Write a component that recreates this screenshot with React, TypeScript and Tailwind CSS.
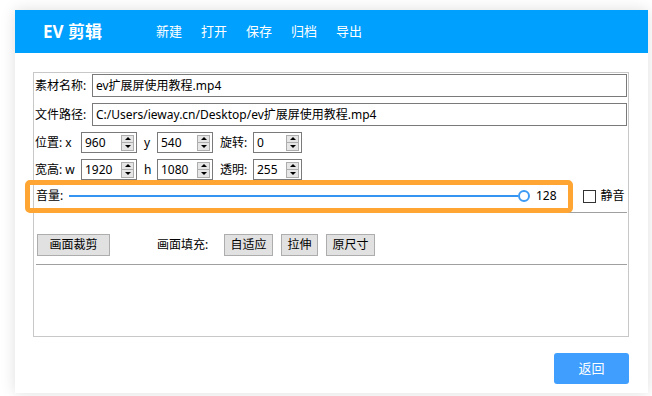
const FONT = "font-['Noto_Sans','Noto_Sans_CJK_SC',sans-serif]";

function Spin({ value, w }: { value: string; w: string }) {
  return (
    <div className={`${w} h-[21px] border border-[#7a7a7a] bg-white flex items-center justify-between pl-[3px] pr-[2px]`}>
      <span className="leading-none">{value}</span>
      {/* up/down arrows */}
      <div className="w-[13px] h-[16px] border border-[#adadad] bg-[#e6e6e6] flex flex-col">
        <div className="flex-1 flex items-center justify-center border-b border-[#adadad]">
          <div className="w-0 h-0 border-l-[3px] border-r-[3px] border-b-[3px] border-l-transparent border-r-transparent border-b-black" />
        </div>
        <div className="flex-1 flex items-center justify-center">
          <div className="w-0 h-0 border-l-[3px] border-r-[3px] border-t-[3px] border-l-transparent border-r-transparent border-t-black" />
        </div>
      </div>
    </div>
  );
}

function GrayButton({ label, w }: { label: string; w: string }) {
  return (
    <button className={`${w} h-[22px] border border-[#adadad] bg-[#e1e1e1] text-[12px] leading-none flex items-center justify-center`}>
      {label}
    </button>
  );
}

export default function App() {
  const nav = ["新建", "打开", "保存", "归档", "导出"];

  return (
    <div className={`w-[652px] h-[396px] bg-white pt-[10px] pl-[15px] overflow-hidden ${FONT}`}>
      <div className="w-[633px] h-[383px] bg-white shadow-[0_0_14px_rgba(0,0,0,0.13)] flex flex-col">
        {/* Header */}
        <div className="h-[43px] bg-[#00a0ff] flex items-center pl-[28px] text-white">
          <div className="w-[113px] text-[17px] font-bold leading-none">EV 剪辑</div>
          <div className="flex gap-[19px] text-[13px] leading-none">
            {nav.map((n) => (
              <span key={n}>{n}</span>
            ))}
          </div>
        </div>

        {/* Body */}
        <div className="pl-[18px] pt-[19px] flex flex-col text-[12px] text-black">
          <div className="relative w-[596px] h-[265px] border border-[#c8c8c8] pt-[1px] px-[1px] flex flex-col">
            <div className="flex flex-col gap-[6px]">
              <div className="flex items-center h-[23px]">
                <span className="w-[57px]">素材名称:</span>
                <div className="flex-1 h-[23px] border border-[#7a7a7a] flex items-center pl-[3px]">ev扩展屏使用教程.mp4</div>
              </div>
              <div className="flex items-center h-[23px]">
                <span className="w-[57px]">文件路径:</span>
                <div className="flex-1 h-[23px] border border-[#7a7a7a] flex items-center pl-[3px]">C:/Users/ieway.cn/Desktop/ev扩展屏使用教程.mp4</div>
              </div>
              <div className="flex items-center h-[21px]">
                <span className="w-[46px]">位置: x</span>
                <Spin value="960" w="w-[56px]" />
                <span className="w-[20px] pl-[7px]">y</span>
                <Spin value="540" w="w-[56px]" />
                <span className="w-[40px] pl-[7px]">旋转:</span>
                <Spin value="0" w="w-[49px]" />
              </div>
              <div className="flex items-center h-[21px]">
                <span className="w-[46px]">宽高: w</span>
                <Spin value="1920" w="w-[56px]" />
                <span className="w-[20px] pl-[7px]">h</span>
                <Spin value="1080" w="w-[56px]" />
                <span className="w-[40px] pl-[7px]">透明:</span>
                <Spin value="255" w="w-[49px]" />
              </div>
            </div>

            {/* Volume row */}
            <div className="flex items-center h-[32px] pl-[1px]">
              <span className="w-[33px]">音量:</span>
              <div className="relative w-[461px] h-[12px] flex items-center">
                <div className="w-[449px] h-[1.5px] bg-[#3593f2]" />
                <div className="w-[12px] h-[12px] rounded-full border-[2.5px] border-[#3d9bf5] bg-white" />
              </div>
              <span className="ml-[6px]">128</span>
              <div className="ml-[26px] w-[13px] h-[13px] border border-[#333] bg-white" />
              <span className="ml-[5px]">静音</span>
            </div>
            <div className="ml-[1px] h-px bg-[#a0a0a0]" />

            {/* Buttons row */}
            <div className="flex items-center mt-[21px] pl-[2px]">
              <GrayButton label="画面裁剪" w="w-[73px]" />
              <span className="ml-[47px] w-[67px]">画面填充:</span>
              <GrayButton label="自适应" w="w-[49px]" />
              <div className="ml-[8px]"><GrayButton label="拉伸" w="w-[37px]" /></div>
              <div className="ml-[8px]"><GrayButton label="原尺寸" w="w-[49px]" /></div>
            </div>
            <div className="ml-[1px] mt-[8px] h-px bg-[#a0a0a0]" />

            {/* Highlight annotation */}
            <div className="absolute left-[-9px] top-[107px] w-[548px] h-[33px] border-[5px] border-[#ffa533] rounded-[5px] pointer-events-none" />
          </div>

          <div className="w-[596px] flex justify-end mt-[16px]">
            <button className="w-[75px] h-[31px] bg-[#409eff] rounded-[3px] text-white text-[13px] flex items-center justify-center">
              返回
            </button>
          </div>
        </div>
      </div>
    </div>
  );
}
